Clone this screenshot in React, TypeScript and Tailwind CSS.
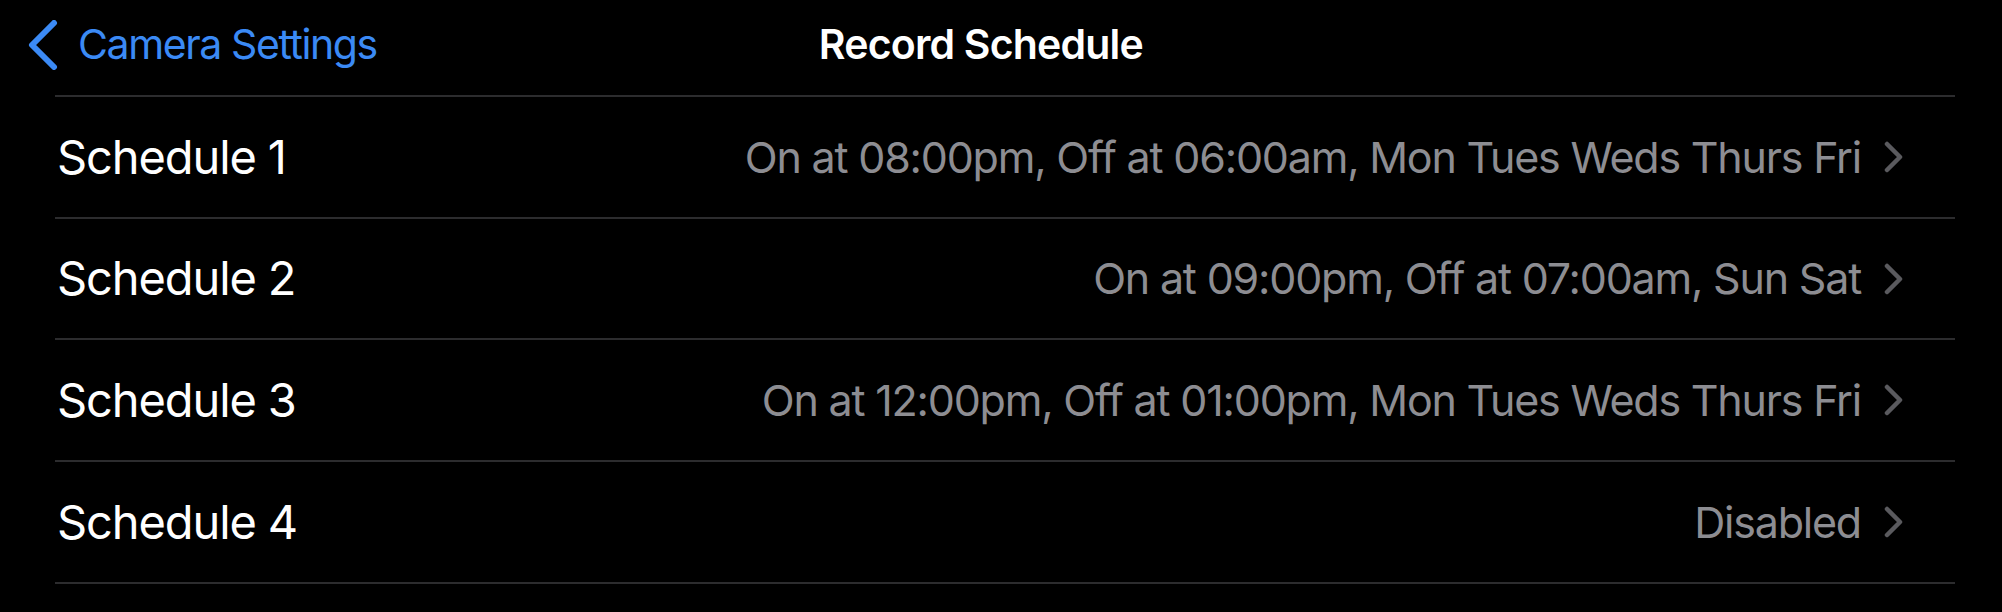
const schedules = [
  { name: 'Schedule 1', value: 'On at 08:00pm, Off at 06:00am, Mon Tues Weds Thurs Fri' },
  { name: 'Schedule 2', value: 'On at 09:00pm, Off at 07:00am, Sun Sat' },
  { name: 'Schedule 3', value: 'On at 12:00pm, Off at 01:00pm, Mon Tues Weds Thurs Fri' },
  { name: 'Schedule 4', value: 'Disabled' },
]

function BackChevron() {
  return (
    <svg width="32" height="50" viewBox="0 0 32 50" fill="none">
      <path
        d="M27 3 L5 25 L27 47"
        stroke="#3b8af5"
        strokeWidth="6"
        strokeLinecap="round"
        strokeLinejoin="round"
      />
    </svg>
  )
}

function RowChevron() {
  return (
    <svg width="22" height="32" viewBox="0 0 22 32" fill="none">
      <path
        d="M4 3 L17 16 L4 29"
        stroke="#5a5a5e"
        strokeWidth="4.5"
        strokeLinecap="round"
        strokeLinejoin="round"
      />
    </svg>
  )
}

export default function App() {
  return (
    <div
      className="w-[2002px] h-[612px] bg-black text-white overflow-hidden"
      style={{ fontFamily: 'Inter, "Noto Sans", sans-serif' }}
    >
      <header className="h-[95px] flex items-center pl-[27px] pb-[6px]">
        <div className="flex items-center gap-[19px]">
          <BackChevron />
          <span className="text-[41px] text-[#3b8af5] tracking-[-1.4px]">Camera Settings</span>
        </div>
        <h1 className="ml-[442px] text-[41px] font-semibold tracking-[-0.8px]">Record Schedule</h1>
      </header>

      <div className="ml-[55px] mr-[47px]">
        <div className="h-[2px] bg-[#2c2c2e]" />
        {schedules.map((s) => (
          <div
            key={s.name}
            className="h-[121.7px] flex items-center justify-between border-b-2 border-[#2c2c2e] pl-[2px] pr-[50px]"
          >
            <span className="text-[47px] tracking-[-1.1px]">{s.name}</span>
            <div className="flex items-center gap-[22px]">
              <span className="text-[43px] text-[#8d8d92] tracking-[-1.2px]">{s.value}</span>
              <RowChevron />
            </div>
          </div>
        ))}
      </div>
    </div>
  )
}
